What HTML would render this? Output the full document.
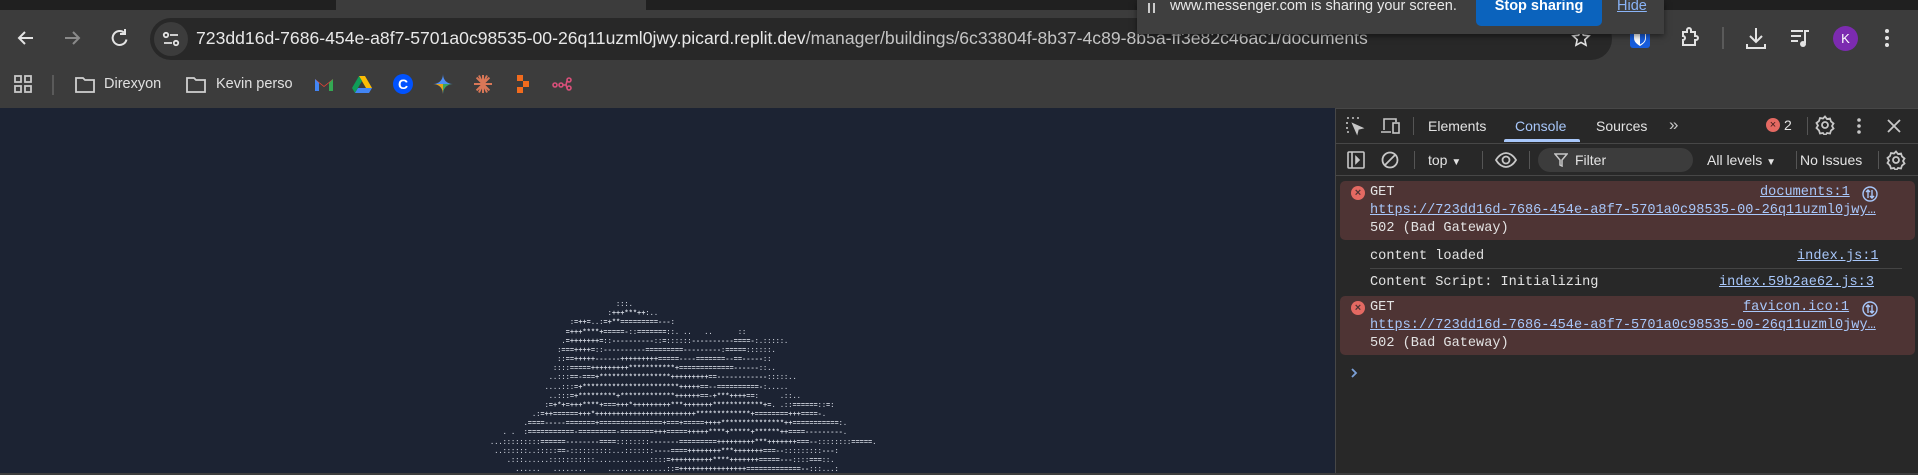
<!DOCTYPE html>
<html><head><meta charset="utf-8"><style>
*{margin:0;padding:0;box-sizing:border-box}
body{width:1918px;height:473px;overflow:hidden;background:#3c3c3c;font-family:"Liberation Sans",sans-serif;position:relative;color:#e3e3e3}
.a{position:absolute}
.ui{font-size:14px;color:#e3e3e3;white-space:nowrap}
.mono{font-family:"Liberation Mono",monospace;font-size:13.6px;white-space:nowrap;color:#e3e3e3}
.lk{color:#a8c7fa;text-decoration:underline}
pre{font-family:"Liberation Mono",monospace;font-size:7.0px;line-height:9.17px;color:#cdd2dc;font-weight:bold;letter-spacing:0}
</style></head><body>
<div class="a" style="left:0;top:0;width:1918px;height:10px;background:#202020"></div>
<div class="a" style="left:336px;top:0;width:310px;height:12px;background:#3c3c3c"></div>
<svg class="a" style="left:14px;top:26px" width="130" height="24" viewBox="0 0 130 24" fill="none" stroke-width="2">
<path d="M19 12H6M11 6l-6 6 6 6" stroke="#e3e3e3"/>
<path d="M51 12h13M59 6l6 6-6 6" stroke="#8a8a8a"/>
<path d="M110 6.5a7 7 0 1 0 2.5 7" stroke="#e3e3e3"/><path d="M111 3v5h-5" stroke="#e3e3e3"/>
</svg>
<div class="a" style="left:150px;top:18px;width:1462px;height:42px;background:#282828;border-radius:21px"></div>
<div class="a" style="left:154px;top:22px;width:34px;height:34px;background:#3c3c3c;border-radius:17px"></div>
<svg class="a" style="left:161px;top:29px" width="20" height="20" viewBox="0 0 20 20" fill="none" stroke="#e3e3e3" stroke-width="1.8"><circle cx="5" cy="6" r="2.2"/><path d="M9 6h8M3 14h8"/><circle cx="15" cy="14" r="2.2"/></svg>
<div class="a ui" style="left:196px;top:28px;font-size:17.6px;color:#e8e8e8">723dd16d-7686-454e-a8f7-5701a0c98535-00-26q11uzml0jwy.picard.replit.dev<span style="color:#c4c4c4">/manager/buildings/6c33804f-8b37-4c89-8b5a-ff3e82c46ac1/documents</span></div>
<svg class="a" style="left:1571px;top:28px" width="20" height="20" viewBox="0 0 20 20"><path d="M10 2l2.4 5.2 5.6.6-4.2 3.8 1.2 5.6L10 14.4 5 17.2l1.2-5.6L2 7.8l5.6-.6z" fill="none" stroke="#e3e3e3" stroke-width="1.6"/></svg>
<div class="a" style="left:1630px;top:26px;width:20px;height:22px;background:#175ddc;border-radius:3px"></div>
<svg class="a" style="left:1630px;top:26px" width="20" height="22" viewBox="0 0 20 22"><path d="M4 4h12v8c0 4-3 6-6 8-3-2-6-4-6-8z" fill="#fff"/><path d="M10 5h5v7c0 3-2 5-5 6.5z" fill="#175ddc"/></svg>
<svg class="a" style="left:1678px;top:25px" width="24" height="24" viewBox="0 0 24 24" fill="none" stroke="#e3e3e3" stroke-width="2"><path d="M5 7h4V5a2 2 0 0 1 4 0v2h4v4h1a2 2 0 0 1 0 4h-1v5H5v-5a2 2 0 0 0 0-4V7z"/></svg>
<div class="a" style="left:1722px;top:27px;width:2px;height:22px;background:#5a5a5a"></div>
<svg class="a" style="left:1744px;top:25px" width="24" height="26" viewBox="0 0 24 26" fill="none" stroke="#e3e3e3" stroke-width="2"><path d="M12 3v13M6 11l6 6 6-6M3 19v4h18v-4"/></svg>
<svg class="a" style="left:1789px;top:27px" width="22" height="22" viewBox="0 0 22 22" fill="#e3e3e3"><rect x="2" y="3" width="12" height="2"/><rect x="2" y="8" width="10" height="2"/><rect x="2" y="13" width="7" height="2"/><rect x="15" y="3" width="2" height="13"/><rect x="15" y="3" width="5" height="2"/><circle cx="14" cy="17" r="3"/></svg>
<div class="a" style="left:1833px;top:26px;width:25px;height:25px;border-radius:50%;background:#7c2bb0;color:#fff;font-size:13px;text-align:center;line-height:25px">K</div>
<svg class="a" style="left:1880px;top:26px" width="14" height="24" viewBox="0 0 14 24" fill="#e3e3e3"><circle cx="7" cy="5" r="2"/><circle cx="7" cy="12" r="2"/><circle cx="7" cy="19" r="2"/></svg>
<div class="a" style="left:1137px;top:0;width:527px;height:34px;background:#3f3f3f;box-shadow:0 2px 6px rgba(0,0,0,.5)"></div>
<div class="a" style="left:1148px;top:3px;width:2px;height:10px;background:#ccc"></div><div class="a" style="left:1153px;top:3px;width:2px;height:10px;background:#ccc"></div>
<div class="a ui" style="left:1170px;top:-2px;font-size:14.5px;color:#e8e8e8">www.messenger.com is sharing your screen.</div>
<div class="a" style="left:1476px;top:-6px;width:126px;height:32px;background:#0b63bd;border-radius:5px;color:#fff;font-size:14.5px;font-weight:bold;text-align:center;line-height:24px">Stop sharing</div>
<div class="a ui" style="left:1617px;top:-2px;font-size:14.5px;color:#8ab4f8;text-decoration:underline">Hide</div>
<svg class="a" style="left:13px;top:74px" width="20" height="20" viewBox="0 0 20 20" fill="none" stroke="#c8c8c8" stroke-width="1.8"><rect x="2" y="2" width="6" height="6"/><rect x="12" y="2" width="6" height="6"/><rect x="2" y="12" width="6" height="6"/><rect x="12" y="12" width="6" height="6"/></svg>
<div class="a" style="left:52px;top:75px;width:2px;height:20px;background:#5a5a5a"></div>
<svg class="a" style="left:74px;top:75px" width="22" height="20" viewBox="0 0 22 20" fill="none" stroke="#d0d0d0" stroke-width="1.8"><path d="M2 3h7l2 2h9v12H2z"/></svg>
<div class="a ui" style="left:104px;top:76px;font-size:14.5px;color:#e0e0e0">Direxyon</div>
<svg class="a" style="left:185px;top:75px" width="22" height="20" viewBox="0 0 22 20" fill="none" stroke="#d0d0d0" stroke-width="1.8"><path d="M2 3h7l2 2h9v12H2z"/></svg>
<div class="a ui" style="left:216px;top:76px;font-size:14.5px;color:#e0e0e0">Kevin perso</div>
<svg class="a" style="left:314px;top:76px" width="20" height="16" viewBox="0 0 20 16"><path d="M1 3v12h4V7l5 4 5-4v8h4V3l-9 7z" fill="#ea4335"/><path d="M1 3v12h4V7z" fill="#4285f4"/><path d="M15 7v8h4V3z" fill="#34a853"/></svg>
<svg class="a" style="left:352px;top:75px" width="20" height="18" viewBox="0 0 20 18"><path d="M7 1h6l7 12h-6z" fill="#fbbc04"/><path d="M7 1L0 13l3 5 7-12z" fill="#0f9d58"/><path d="M3 18h14l3-5H6z" fill="#4285f4"/></svg>
<div class="a" style="left:393px;top:74px;width:20px;height:20px;border-radius:50%;background:#0052ff;color:#fff;font-weight:bold;font-size:14px;text-align:center;line-height:20px">C</div>
<svg class="a" style="left:433px;top:74px" width="20" height="20" viewBox="0 0 20 20"><path d="M10 0C10 6 14 10 20 10 14 10 10 14 10 20 10 14 6 10 0 10 6 10 10 6 10 0z" fill="#4e8ef7"/><path d="M10 10L0 10C6 10 10 14 10 20z" fill="#e3a21a"/><path d="M10 10L20 10C14 10 10 14 10 20z" fill="#3ba55d"/></svg>
<svg class="a" style="left:473px;top:74px" width="20" height="20" viewBox="0 0 20 20" stroke="#d97757" stroke-width="2"><path d="M10 1v18M1 10h18M3.6 3.6l12.8 12.8M16.4 3.6L3.6 16.4M6 1.5l8 17M14 1.5l-8 17"/></svg>
<svg class="a" style="left:515px;top:74px" width="16" height="20" viewBox="0 0 16 20" fill="#f26b1d"><rect x="2" y="1" width="6" height="6"/><rect x="8" y="7" width="6" height="6"/><rect x="2" y="13" width="6" height="6"/></svg>
<svg class="a" style="left:552px;top:76px" width="22" height="16" viewBox="0 0 22 16" fill="none" stroke="#d94f7a" stroke-width="1.6"><circle cx="3" cy="9" r="2"/><circle cx="9" cy="9" r="2"/><circle cx="17" cy="4" r="2"/><circle cx="17" cy="12" r="2"/><path d="M11 9h3l1-4M14 9l1 3"/></svg>
<div class="a" style="left:0;top:108px;width:1335px;height:365px;background:#1c2333"></div>
<pre class="a" style="left:490px;top:301px">                              :::.
                            :+++***++:..
                   :=++=..:=+**=========---:
                  =+++****+=====-::=======::. ..   ..      ::
                 .=+++++++=::----------::=::::::----------====-:.:::::.
                :===++++=::----------=========---------:=====::::::.
                ::==+++++------+++++++++=====----=======--==-----::
               ::::=====+++++++++***********+=============------::..
              ..:::==-===+*****************+++++++++==------------:::::..
             ....:::=+***********************+++++==--==========-:.....
              ..:::=+*********+*************++++++==-+***++++==:     .::..
             :=+*+=+++****+===+++*+++++++++***+++++++************+=. .::======::=:
          .:=++======+++*++++++++++++++++++++++++*************+========+++====-.
        .====-----=======+===============+===+=====++++***************++===========:.
   . .  :===========-=========-========+++=====+++++****+*****+******++====---------.
...:::::::::======--------====::::::::-------=========+++++++++***+++++++===--::::::::=====.
 ..::::::..:::::==-::::::::::...:::::::----====++++++++***+++++++===--:::::::::---:
    .:::......:::::::::::.............::::=++++++++++****+++++++=====---::::===::.
      ......   ........     ..............::=++++++++++++++++=============--:::...:</pre>
<div class="a" style="left:1335px;top:108px;width:583px;height:365px;background:#282828;border-left:1px solid #474747"></div>
<div class="a" style="left:1335px;top:108px;width:583px;height:1px;background:#474747"></div>
<svg class="a" style="left:1345px;top:116px" width="20" height="20" viewBox="0 0 20 20" fill="none" stroke="#c7c7c7" stroke-width="1.6"><path d="M2 2h2M7 2h2M12 2h2M2 6v2M2 11v2M2 16h2" /><path d="M8 8l9 4-4 1-1 4z" fill="#c7c7c7"/></svg>
<svg class="a" style="left:1380px;top:116px" width="22" height="20" viewBox="0 0 22 20" fill="none" stroke="#c7c7c7" stroke-width="1.6"><path d="M4 14V3h12v3M1 16h10"/><rect x="13" y="7" width="6" height="10"/></svg>
<div class="a" style="left:1413px;top:117px;width:1px;height:18px;background:#555"></div>
<div class="a ui" style="left:1428px;top:118px">Elements</div>
<div class="a ui" style="left:1515px;top:118px;color:#a8c7fa">Console</div>
<div class="a" style="left:1504px;top:139px;width:76px;height:3px;background:#a8c7fa;border-radius:2px 2px 0 0"></div>
<div class="a ui" style="left:1596px;top:118px">Sources</div>
<div class="a ui" style="left:1669px;top:115px;font-size:17px;color:#c7c7c7">»</div>
<div class="a" style="left:1766px;top:118px;width:14px;height:14px;border-radius:50%;background:#e46962;color:#3a1a1a;font-size:11px;text-align:center;line-height:14px">×</div>
<div class="a ui" style="left:1784px;top:117px">2</div>
<div class="a" style="left:1807px;top:117px;width:1px;height:18px;background:#555"></div>
<svg class="a" style="left:1815px;top:115px" width="20" height="20" viewBox="0 0 20 20" fill="none" stroke="#c7c7c7" stroke-width="1.8"><circle cx="10" cy="10" r="3"/><path d="M10 1.5l2 2.5 3-.5 1 3 2.5 2-1.5 2.5 1.5 2.5-2.5 2-1 3-3-.5-2 2.5-2-2.5-3 .5-1-3L1.5 13 3 10.5 1.5 8 4 6l1-3 3 .5z"/></svg>
<svg class="a" style="left:1853px;top:116px" width="12" height="20" viewBox="0 0 12 20" fill="#c7c7c7"><circle cx="6" cy="4" r="1.8"/><circle cx="6" cy="10" r="1.8"/><circle cx="6" cy="16" r="1.8"/></svg>
<svg class="a" style="left:1886px;top:118px" width="16" height="16" viewBox="0 0 16 16" stroke="#c7c7c7" stroke-width="1.8"><path d="M2 2l12 12M14 2L2 14"/></svg>
<div class="a" style="left:1335px;top:143px;width:583px;height:1px;background:#474747"></div>
<svg class="a" style="left:1346px;top:150px" width="20" height="20" viewBox="0 0 20 20" fill="none" stroke="#c7c7c7" stroke-width="1.6"><rect x="2" y="2" width="16" height="16" rx="1"/><path d="M6 2v16"/><path d="M10 7l3 3-3 3z" fill="#c7c7c7"/></svg>
<svg class="a" style="left:1380px;top:150px" width="20" height="20" viewBox="0 0 20 20" fill="none" stroke="#c7c7c7" stroke-width="1.8"><circle cx="10" cy="10" r="7.5"/><path d="M5 15L15 5"/></svg>
<div class="a" style="left:1414px;top:151px;width:1px;height:18px;background:#555"></div>
<div class="a ui" style="left:1428px;top:152px">top <span style="font-size:10px">▼</span></div>
<div class="a" style="left:1482px;top:151px;width:1px;height:18px;background:#555"></div>
<svg class="a" style="left:1494px;top:150px" width="24" height="20" viewBox="0 0 24 20" fill="none" stroke="#c7c7c7" stroke-width="1.8"><path d="M2 10c3-5 7-7 10-7s7 2 10 7c-3 5-7 7-10 7s-7-2-10-7z"/><circle cx="12" cy="10" r="3.5"/></svg>
<div class="a" style="left:1529px;top:151px;width:1px;height:18px;background:#555"></div>
<div class="a" style="left:1538px;top:148px;width:155px;height:24px;background:#3c3c3c;border-radius:12px"></div>
<svg class="a" style="left:1554px;top:153px" width="14" height="14" viewBox="0 0 14 14" fill="none" stroke="#c7c7c7" stroke-width="1.5"><path d="M1 1h12L8 7v6L6 12V7z"/></svg>
<div class="a ui" style="left:1575px;top:152px">Filter</div>
<div class="a ui" style="left:1707px;top:152px">All levels <span style="font-size:10px">▼</span></div>
<div class="a" style="left:1796px;top:151px;width:1px;height:18px;background:#555"></div>
<div class="a ui" style="left:1800px;top:152px">No Issues</div>
<div class="a" style="left:1878px;top:151px;width:1px;height:18px;background:#555"></div>
<svg class="a" style="left:1886px;top:150px" width="20" height="20" viewBox="0 0 20 20" fill="none" stroke="#c7c7c7" stroke-width="1.8"><circle cx="10" cy="10" r="3"/><path d="M10 1.5l2 2.5 3-.5 1 3 2.5 2-1.5 2.5 1.5 2.5-2.5 2-1 3-3-.5-2 2.5-2-2.5-3 .5-1-3L1.5 13 3 10.5 1.5 8 4 6l1-3 3 .5z"/></svg>
<div class="a" style="left:1335px;top:175px;width:583px;height:1px;background:#474747"></div>
<div class="a" style="left:1340px;top:181px;width:575px;height:59px;background:#4e3434;border-radius:5px"></div>
<div class="a" style="left:1351px;top:186px;width:14px;height:14px;border-radius:50%;background:#e46962;color:#4e3434;font-size:11px;font-weight:bold;text-align:center;line-height:14px">×</div>
<div class="a mono" style="left:1370px;top:185px">GET</div>
<div class="a mono lk" style="left:1760px;top:185px">documents:1</div>
<svg class="a" style="left:1862px;top:186px" width="16" height="16" viewBox="0 0 16 16" fill="none" stroke="#a8c7fa" stroke-width="1.4"><circle cx="8" cy="8" r="7"/><path d="M6 12V4M4 6l2-2 2 2M10 4v8M8 10l2 2 2-2"/></svg>
<div class="a mono lk" style="left:1370px;top:203px">https://723dd16d-7686-454e-a8f7-5701a0c98535-00-26q11uzml0jwy…</div>
<div class="a mono" style="left:1370px;top:221px">502 (Bad Gateway)</div>
<div class="a mono" style="left:1370px;top:249px">content loaded</div>
<div class="a mono" style="left:1797px;top:249px"><span class="lk">index.js:1</span></div>
<div class="a" style="left:1370px;top:268px;width:532px;height:1px;background:#444"></div>
<div class="a mono" style="left:1370px;top:275px">Content Script: Initializing</div>
<div class="a mono lk" style="left:1719px;top:275px">index.59b2ae62.js:3</div>
<div class="a" style="left:1340px;top:296px;width:575px;height:59px;background:#4e3434;border-radius:5px"></div>
<div class="a" style="left:1351px;top:301px;width:14px;height:14px;border-radius:50%;background:#e46962;color:#4e3434;font-size:11px;font-weight:bold;text-align:center;line-height:14px">×</div>
<div class="a mono" style="left:1370px;top:300px">GET</div>
<div class="a mono lk" style="left:1743px;top:300px">favicon.ico:1</div>
<svg class="a" style="left:1862px;top:301px" width="16" height="16" viewBox="0 0 16 16" fill="none" stroke="#a8c7fa" stroke-width="1.4"><circle cx="8" cy="8" r="7"/><path d="M6 12V4M4 6l2-2 2 2M10 4v8M8 10l2 2 2-2"/></svg>
<div class="a mono lk" style="left:1370px;top:318px">https://723dd16d-7686-454e-a8f7-5701a0c98535-00-26q11uzml0jwy…</div>
<div class="a mono" style="left:1370px;top:336px">502 (Bad Gateway)</div>
<svg class="a" style="left:1349px;top:366px" width="10" height="14" viewBox="0 0 10 14" fill="none" stroke="#7ba0d8" stroke-width="1.8"><path d="M3 3l4 4-4 4"/></svg>
</body></html>
